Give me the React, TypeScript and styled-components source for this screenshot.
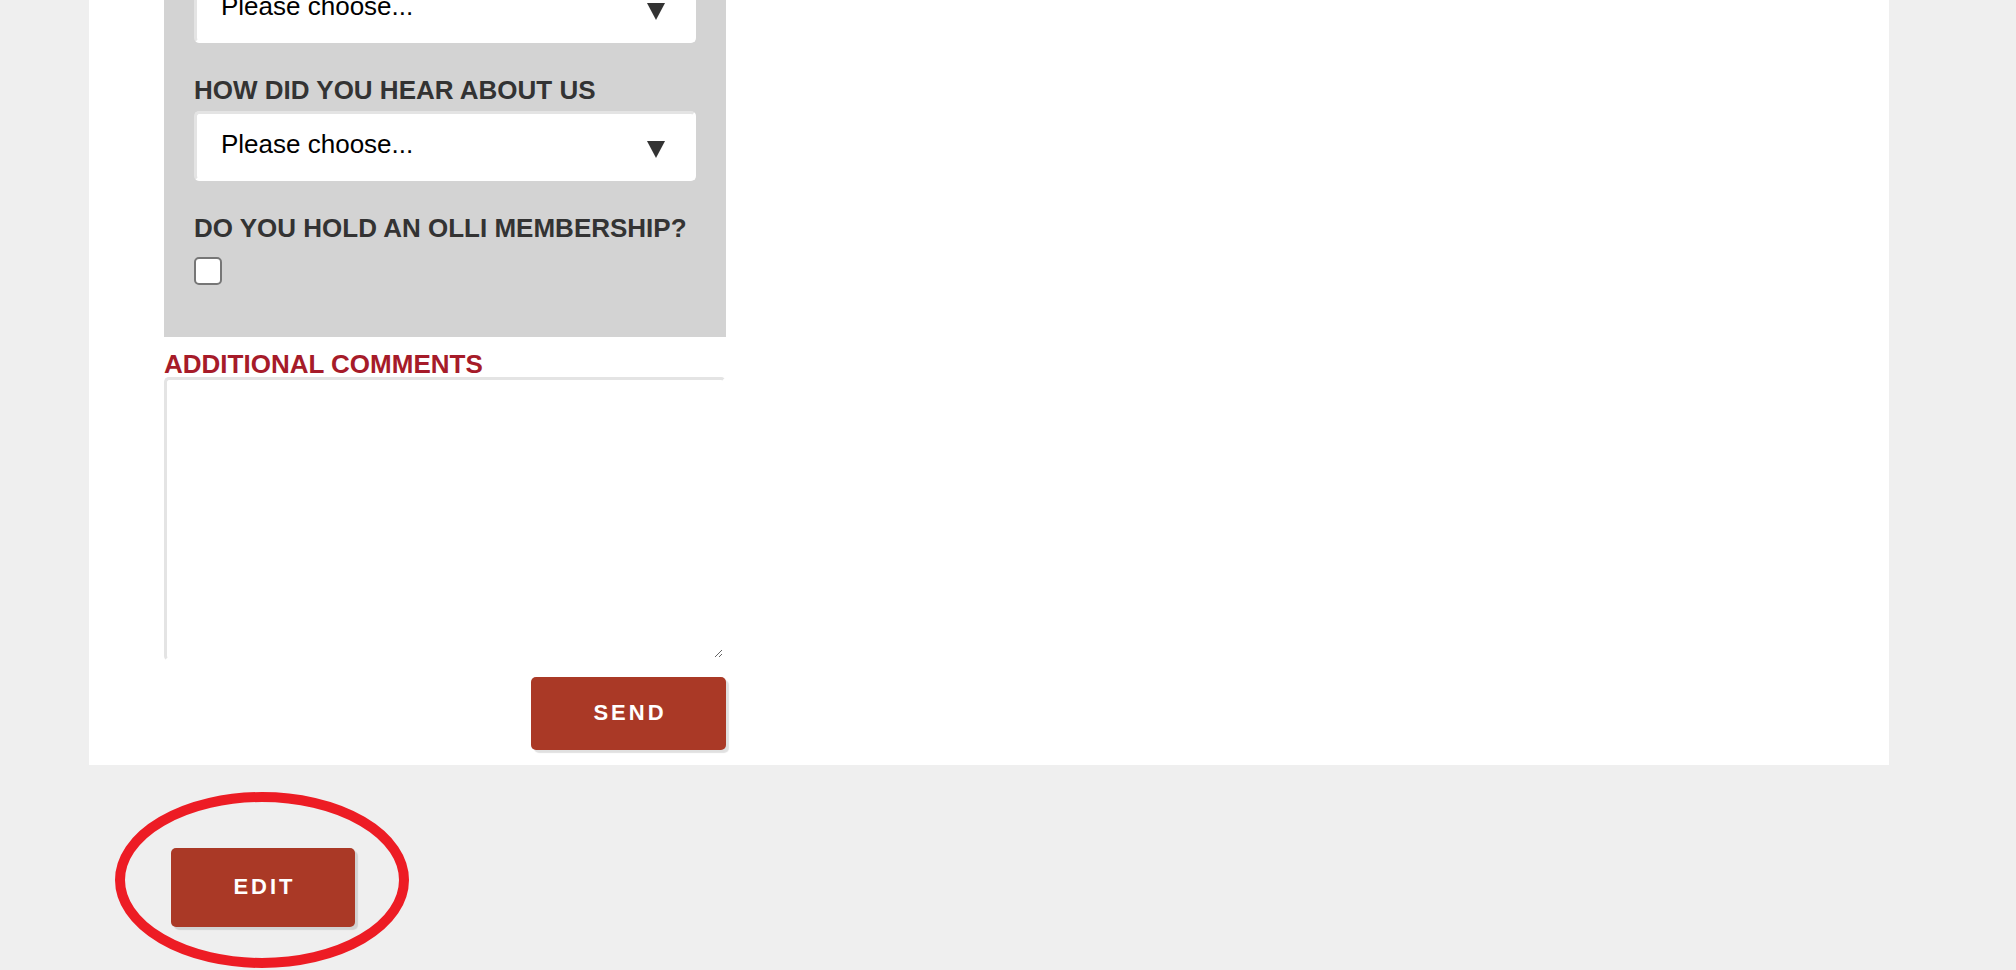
import React from "react";
import styled, { createGlobalStyle } from "styled-components";

const GlobalStyle = createGlobalStyle`
  html {
    overflow: hidden;
  }
  html, body {
    margin: 0;
    padding: 0;
    background: #efefef;
  }
  body {
    font-family: "Liberation Sans", Arial, Helvetica, sans-serif;
  }
  * { box-sizing: border-box; }
`;

const Page = styled.div`
  display: flow-root;
  min-height: 970px;
  padding-left: 89px;
`;

const Panel = styled.section`
  width: 1800px;
  margin-top: -27px;
  padding: 0 0 15px 75px;
  background: #ffffff;
`;

const FormColumn = styled.form`
  width: 562px;
  display: flex;
  flex-direction: column;
`;

const GreyBox = styled.div`
  display: flex;
  flex-direction: column;
  gap: 34px;
  padding: 0 30px 52px;
  background: #d3d3d3;
`;

const Field = styled.div<{ $gap: number }>`
  display: flex;
  flex-direction: column;
  align-items: flex-start;
  gap: ${(p) => p.$gap}px;
`;

const FieldLabel = styled.label<{ $accent?: boolean }>`
  margin: 0;
  font-size: 26px;
  line-height: 26px;
  font-weight: 700;
  color: ${(p) => (p.$accent ? "#a61b29" : "#333333")};
`;

const SelectBox = styled.div`
  width: 100%;
  height: 70px;
  display: flex;
  align-items: center;
  justify-content: space-between;
  padding: 0 28px 4px 24px;
  border: 3px solid;
  border-color: #e4e4e4 #ffffff #ffffff #e4e4e4;
  border-radius: 5px;
  background: #ffffff;
  font-size: 26px;
  color: #000000;
`;

const SelectArrow = styled.svg`
  width: 18px;
  height: 17px;
  margin-top: 10px;
  flex: none;
`;

const CheckBox = styled.input`
  appearance: none;
  width: 28px;
  height: 28px;
  margin: 0;
  border: 2px solid #767676;
  border-radius: 5px;
  background: #ffffff;
`;

const CommentsLabel = styled(FieldLabel)`
  margin-top: 14px;
`;

const Comments = styled.textarea`
  width: 562px;
  height: 284px;
  margin: 0;
  padding: 8px 12px;
  border: 3px solid;
  border-color: #e4e4e4 #ffffff #ffffff #e4e4e4;
  border-radius: 5px;
  background: #ffffff;
  font: 22px "Liberation Sans", Arial, sans-serif;
  resize: vertical;
  outline: none;
`;

const ButtonRow = styled.div`
  display: flex;
  justify-content: flex-end;
  margin-top: 16px;
`;

const ActionButton = styled.button<{ $w: number; $h: number }>`
  display: block;
  width: ${(p) => p.$w}px;
  height: ${(p) => p.$h}px;
  padding: 0 0 2px 3px;
  border: none;
  border-radius: 5px;
  background: #aa3926;
  box-shadow: 3px 3px 1px rgba(0, 0, 0, 0.12);
  color: #ffffff;
  font: 700 22px "Liberation Sans", Arial, sans-serif;
  letter-spacing: 3px;
  cursor: pointer;
`;

const EditArea = styled.div`
  display: flex;
  padding: 83px 0 0 82px;
`;

const Highlighted = styled.div`
  position: relative;
`;

const Ring = styled.svg`
  position: absolute;
  left: -56px;
  top: -56px;
  width: 294px;
  height: 176px;
  pointer-events: none;
  overflow: visible;
`;

const Arrow = () => (
  <SelectArrow viewBox="0 0 18 17" aria-hidden="true">
    <polygon points="0,0 18,0 9,17" fill="#333333" />
  </SelectArrow>
);

export default function App() {
  return (
    <>
      <GlobalStyle />
      <Page>
        <Panel>
          <FormColumn onSubmit={(e) => e.preventDefault()}>
            <GreyBox>
              <SelectBox>
                <span>Please choose...</span>
                <Arrow />
              </SelectBox>
              <Field $gap={8}>
                <FieldLabel>HOW DID YOU HEAR ABOUT US</FieldLabel>
                <SelectBox>
                  <span>Please choose...</span>
                  <Arrow />
                </SelectBox>
              </Field>
              <Field $gap={16}>
                <FieldLabel>DO YOU HOLD AN OLLI MEMBERSHIP?</FieldLabel>
                <CheckBox type="checkbox" />
              </Field>
            </GreyBox>
            <CommentsLabel $accent>ADDITIONAL COMMENTS</CommentsLabel>
            <Comments />
            <ButtonRow>
              <ActionButton type="submit" $w={195} $h={73}>
                SEND
              </ActionButton>
            </ButtonRow>
          </FormColumn>
        </Panel>
        <EditArea>
          <Highlighted>
            <ActionButton type="button" $w={184} $h={79}>
              EDIT
            </ActionButton>
            <Ring viewBox="0 0 294 176" aria-hidden="true">
              <ellipse
                cx="147"
                cy="88"
                rx="142"
                ry="83"
                fill="none"
                stroke="#ed1c24"
                strokeWidth="10"
              />
            </Ring>
          </Highlighted>
        </EditArea>
      </Page>
    </>
  );
}
